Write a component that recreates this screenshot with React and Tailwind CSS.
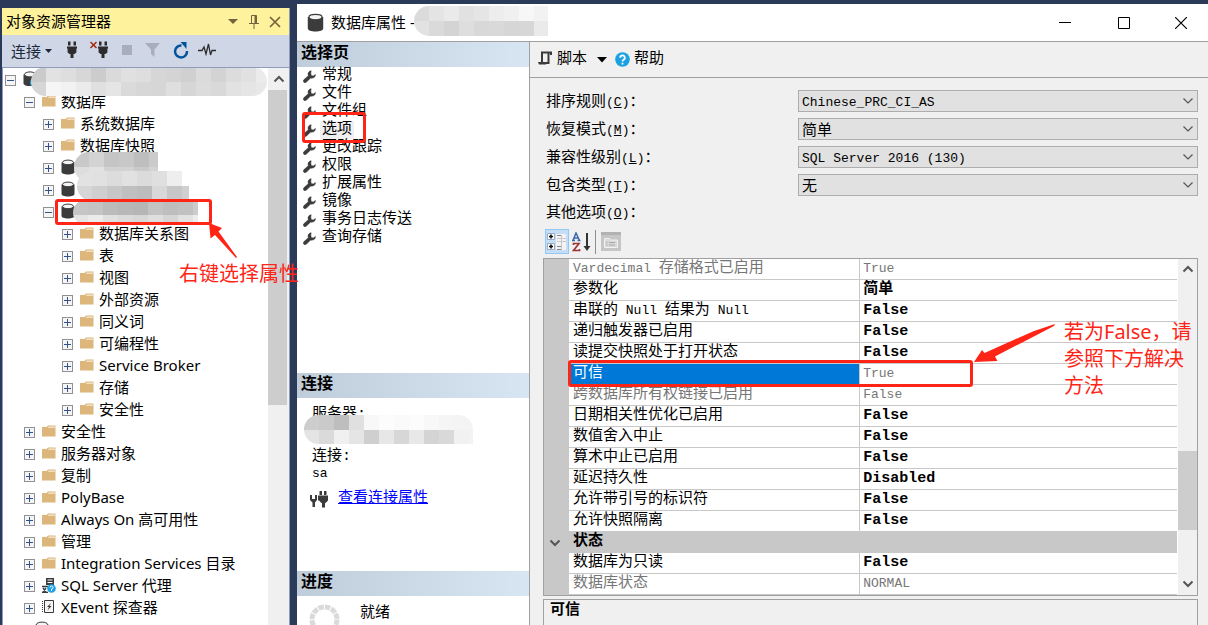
import { useState } from 'react'

const tree = [
    { label: '', level: 0, open: true, icon: 'server' },
    { label: '数据库', level: 1, open: true, icon: 'folder' },
    { label: '系统数据库', level: 2, icon: 'folder' },
    { label: '数据库快照', level: 2, icon: 'folder' },
    { label: '', level: 2, icon: 'db' },
    { label: '', level: 2, icon: 'db' },
    { label: '', level: 2, open: true, icon: 'db', marked: true },
    { label: '数据库关系图', level: 3, icon: 'folder' },
    { label: '表', level: 3, icon: 'folder' },
    { label: '视图', level: 3, icon: 'folder' },
    { label: '外部资源', level: 3, icon: 'folder' },
    { label: '同义词', level: 3, icon: 'folder' },
    { label: '可编程性', level: 3, icon: 'folder' },
    { label: 'Service Broker', level: 3, icon: 'folder' },
    { label: '存储', level: 3, icon: 'folder' },
    { label: '安全性', level: 3, icon: 'folder' },
    { label: '安全性', level: 1, icon: 'folder' },
    { label: '服务器对象', level: 1, icon: 'folder' },
    { label: '复制', level: 1, icon: 'folder' },
    { label: 'PolyBase', level: 1, icon: 'folder' },
    { label: 'Always On 高可用性', level: 1, icon: 'folder' },
    { label: '管理', level: 1, icon: 'folder' },
    { label: 'Integration Services 目录', level: 1, icon: 'folder' },
    { label: 'SQL Server 代理', level: 1, icon: 'agent' },
    { label: 'XEvent 探查器', level: 1, icon: 'xevent' },
    { label: '', level: 1, icon: 'db', last: true },
];

const indents = ['pl-[2px]', 'pl-[21px]', 'pl-[40px]', 'pl-[59px]'];

const pages = ['常规', '文件', '文件组', '选项', '更改跟踪', '权限', '扩展属性', '镜像', '事务日志传送', '查询存储'];

const fields = [
    { id: 'collation', label: '排序规则', key: 'C', value: 'Chinese_PRC_CI_AS', latin: true },
    { id: 'recovery', label: '恢复模式', key: 'M', value: '简单' },
    { id: 'compat', label: '兼容性级别', key: 'L', value: 'SQL Server 2016 (130)', latin: true },
    { id: 'containment', label: '包含类型', key: 'T', value: '无' },
];

const rows = [
    { name: 'Vardecimal 存储格式已启用', value: 'True', readOnly: true },
    { name: '参数化', value: '简单' },
    { name: '串联的 Null 结果为 Null', value: 'False' },
    { name: '递归触发器已启用', value: 'False' },
    { name: '读提交快照处于打开状态', value: 'False' },
    { name: '可信', value: 'True', readOnly: true, selected: true },
    { name: '跨数据库所有权链接已启用', value: 'False', readOnly: true },
    { name: '日期相关性优化已启用', value: 'False' },
    { name: '数值舍入中止', value: 'False' },
    { name: '算术中止已启用', value: 'False' },
    { name: '延迟持久性', value: 'Disabled' },
    { name: '允许带引号的标识符', value: 'False' },
    { name: '允许快照隔离', value: 'False' },
    { name: '状态', category: true },
    { name: '数据库为只读', value: 'False' },
    { name: '数据库状态', value: 'NORMAL', readOnly: true },
];

// Latin runs sit narrower than the CJK text around them
function Mixed({ text, bold }) {
    const parts = text.split(/([\x20-\x7e]+)/).filter(Boolean);
    return parts.map((part, i) =>
        /^[\x20-\x7e]/.test(part)
            ? <span key={i} className={`whitespace-pre ${bold ? 'text-[15px]' : 'text-[13px]'}`}>{part}</span>
            : <span key={i}>{part}</span>
    );
}

// grey blocks that hide server and database names
function Mosaic({ cells, className }) {
    const width = Math.max(...cells.map((row) => row.length)) * 15;
    return (
        <div className={`absolute overflow-hidden pointer-events-none ${className}`}>
            <svg width={width} height={cells.length * 15} className="block" shapeRendering="crispEdges">
                {cells.map((row, y) => row.map((g, x) => (
                    g < 255 && <rect key={`${x}-${y}`} x={x * 15} y={y * 15} width="15" height="15" fill={`rgb(${g},${g},${g})`} />
                )))}
            </svg>
        </div>
    );
}

function Cylinder({ size = 14 }) {
    return (
        <svg width={size} height={size + 2} viewBox="0 0 14 16" className="shrink-0">
            <path d="M.5 3.400v9.400C.5 14.600 3.300 15.500 7 15.500s6.500-.9 6.500-2.700V3.400z" fill="#3b3b3b" />
            <ellipse cx="7" cy="3.400" rx="5.500" ry="2.300" fill="#f4f4f4" stroke="#3b3b3b" />
        </svg>
    );
}

function TreeIcon({ type }) {
    if (type === 'folder') {
        return (
            <svg width="14" height="12" viewBox="0 0 14 12" className="shrink-0">
                <path d="M0 2h4.500L6 .5h7.500V11.500H0z" fill="#dcb67a" />
                <path d="M5.500 2.800L6.800 1.500H13v1.300z" fill="#f6ead6" />
            </svg>
        );
    }
    if (type === 'agent') {
        return (
            <svg width="14" height="15" viewBox="0 0 14 15" className="shrink-0">
                <path d="M4 0h8v7H4z" fill="#3b3b3b" />
                <path d="M5.500 2h5M5.500 4.500h5" stroke="#fff" />
                <path d="M0 8.500h6M1 10l3 4M4 10l-3 4M0 14.500h6" stroke="#3b3b3b" strokeWidth="1.300" />
                <circle cx="9.500" cy="10.500" r="4.300" fill="#1ba1e2" />
                <path d="M8 9.500a1.500 1.500 0 1 1 1.500 1.500v2" stroke="#fff" fill="none" />
            </svg>
        );
    }
    if (type === 'xevent') {
        return (
            <svg width="14" height="14" viewBox="0 0 14 14" className="shrink-0">
                <path d="M2.500.5h9v12h-9z" fill="#f4f4f4" stroke="#3b3b3b" />
                <path d="M.5 1v12" stroke="#3b3b3b" strokeDasharray="1 1" />
                <path d="M9 3L5 7h2l-1.500 3.500L9.500 6h-2z" fill="#3b3b3b" />
            </svg>
        );
    }
    if (type === 'server') {
        return (
            <svg width="14" height="16" viewBox="0 0 14 16" className="shrink-0">
                <path d="M.5 3.400v9C.5 14 3.600 15 7 15h5V3.400z" fill="#3b3b3b" />
                <ellipse cx="7" cy="3.400" rx="5.500" ry="2.500" fill="#f4f4f4" stroke="#3b3b3b" />
                <circle cx="11" cy="11.500" r="4" fill="#1ba1e2" />
            </svg>
        );
    }
    return <Cylinder />;
}

function Plug() {
    return (
        <svg width="12" height="18" viewBox="0 0 12 18">
            <path d="M2 .5h2.500v4H2zM7.500.5H10v4H7.500zM1 5.500h10v2h-.6v4L8.500 13H7.500v4h-3v-4h-1L1.600 11.500v-4H1z" fill="#2d2d2d" />
        </svg>
    );
}

function Wrench() {
    return (
        <svg width="13" height="13" viewBox="0 0 13 13" className="shrink-0">
            <path d="M8.200.8C6.400.9 5 2.300 5 4.100c0 .6.100 1.100.3 1.600L1 9.600c-.9.900-.9 1.900-.2 2.600.7.700 1.800.7 2.700-.1l4.200-4.200c.5.200 1 .3 1.600.2 1.900-.1 3.300-1.600 3.100-3.600L10.300 6 8.200 5.600 7.800 3z" fill="#3b3b3b" stroke="#3b3b3b" strokeWidth=".5" />
        </svg>
    );
}

function Chevron({ up, bold }) {
    return (
        <svg width="12" height="8" viewBox="0 0 12 8">
            <path d={up ? 'M1.500 6.500L6 2l4.500 4.500' : 'M1.500 1.500L6 6l4.500-4.500'} fill="none" stroke="#555" strokeWidth={bold ? 2 : 1.2} />
        </svg>
    );
}

function ExplorerHeader() {
    return (
        <>
            <div className="flex items-center h-[27px] pl-1 pr-2 bg-[#fff29d]">
                <h2 className="text-[15px] flex-1">对象资源管理器</h2>
                <div className="flex items-center gap-[9px]">
                    <button aria-label="窗口位置" className="w-3 flex justify-center">
                        <svg width="10" height="5" viewBox="0 0 10 5"><path d="M0 0h10L5 5z" fill="#75633d" /></svg>
                    </button>
                    <button aria-label="自动隐藏" className="w-3 flex justify-center">
                        <svg width="10" height="14" viewBox="0 0 10 14" fill="none" stroke="#75633d">
                            <path d="M2.500 8V.5h5V8M0 8.500h10M5 9v5" /><path d="M6.500 1v7" strokeWidth="2" />
                        </svg>
                    </button>
                    <button aria-label="关闭" className="w-3 flex justify-center">
                        <svg width="12" height="12" viewBox="0 0 12 12"><path d="M1 1l10 10M11 1L1 11" stroke="#75633d" strokeWidth="1.700" /></svg>
                    </button>
                </div>
            </div>
            <div className="flex items-center h-8 pl-[9px] pb-0.5 bg-[#cfd6e5] text-[#1b293e]">
                <button className="flex items-center gap-1 pt-0.5 text-[15px]">
                    连接
                    <svg width="7" height="4" viewBox="0 0 7 4"><path d="M0 0h7L3.500 4z" fill="#1b293e" /></svg>
                </button>
                <div className="flex items-center gap-[13px] pl-[14px]">
                    <button aria-label="连接服务器"><Plug /></button>
                    <button aria-label="断开连接" className="flex items-start -ml-px">
                        <svg width="7" height="8" viewBox="0 0 7 8"><path d="M.5 1l6 6M6.500 1l-6 6" stroke="#a1260d" strokeWidth="1.500" /></svg>
                        <Plug />
                    </button>
                    <button aria-label="停止" className="size-[10px] bg-[#a8aebb]" />
                    <button aria-label="筛选">
                        <svg width="15" height="14" viewBox="0 0 15 14"><path d="M0 0h15L9.500 6.500V14L6 11V6.500z" fill="#a8aebb" /></svg>
                    </button>
                    <button aria-label="刷新">
                        <svg width="16" height="17" viewBox="0 0 16 17">
                            <path d="M8.500 3.500A6 6 0 1 0 14 9" fill="none" stroke="#00539c" strokeWidth="2.500" />
                            <path d="M7.500 0H13.500v7z" fill="#00539c" />
                        </svg>
                    </button>
                    <button aria-label="活动监视器" className="-ml-1">
                        <svg width="18" height="14" viewBox="0 0 18 14"><path d="M0 7.500h4L6 4l2 7L10.500 1l2 11L14 7.500h4" fill="none" stroke="#2d2d2d" strokeWidth="1.300" /></svg>
                    </button>
                </div>
            </div>
        </>
    );
}

function TreeRow({ item }) {
    return (
        <li className={`relative flex items-center h-[22px] shrink-0 ${indents[item.level]}`}>
            {item.last ? <span className="w-[11px]" /> : (
                <button aria-label={item.open ? '折叠' : '展开'} className="mt-0.5 size-[11px] shrink-0 border border-[#919191] bg-[#f5f5f5]">
                    <svg width="9" height="9" viewBox="0 0 9 9" className="block">
                        <path d={item.open ? 'M1 4.500h7' : 'M1 4.500h7M4.500 1v7'} stroke="#33508f" />
                    </svg>
                </button>
            )}
            <span className={`flex justify-center w-[14px] ${item.last ? '' : 'ml-[7px]'}`}><TreeIcon type={item.icon} /></span>
            <span className="pl-[5px] text-[15px] whitespace-nowrap">{item.label}</span>
            {item.marked && <span className="absolute z-10 left-[52px] -top-px w-[157px] h-[26px] border-[3px] border-[#ff2516] rounded-[3px]" />}
        </li>
    );
}

function Explorer() {
    return (
        <aside className="flex flex-col w-72 shrink-0 mt-2 mr-[7px] ml-0.5 border-r border-[#8e9bbc] overflow-hidden">
            <ExplorerHeader />
            <div className="flex flex-1 min-h-0 bg-white border-t border-l border-[#8e9bbc]">
                <ul className="relative flex-1 min-w-0 overflow-hidden">
                    {tree.map((item, i) => <TreeRow key={i} item={item} />)}
                    <Mosaic className="left-[28px] -top-px h-[29px] w-[236px] rounded-full" cells={[
                        [203, 226, 222, 215, 204, 218, 224, 222, 214, 212, 208, 219, 211, 220, 225, 235],
                        [214, 246, 242, 235, 224, 229, 218, 215, 214, 223, 214, 220, 217, 226, 229, 232],
                    ]} />
                    <Mosaic className="left-[71px] top-[84px] h-[30px] w-[84px] rounded-l-full" cells={[
                        [201, 211, 197, 200, 190, 203],
                        [221, 226, 210, 211, 202, 211],
                    ]} />
                    <Mosaic className="left-[74px] top-[103px] h-[30px] w-[112px] rounded-l-full" cells={[
                        [226, 225, 220, 225, 219, 223, 238, 255],
                        [214, 207, 199, 191, 188, 216, 199, 208],
                    ]} />
                    <Mosaic className="left-[70px] top-[132px] h-[25px] w-[125px] rounded-l-full" cells={[
                        [198, 196, 187, 184, 182, 195, 190, 193, 204],
                        [228, 235, 224, 219, 215, 223, 213, 226, 236],
                    ]} />
                </ul>
                <div className="flex flex-col items-center w-[21px] bg-[#f0f0f0]">
                    <button aria-label="向上滚动" className="flex items-center justify-center h-[22px]"><Chevron up bold /></button>
                    <div className="w-[19px] h-[315px] mr-0.5 bg-[#cdcdcd]" />
                </div>
            </div>
        </aside>
    );
}

function SectionTitle({ children }) {
    return <h3 className="flex items-center h-[25px] pl-1 pb-0.5 text-[16px] font-bold bg-linear-to-r from-[#bfccda] to-[#d8e5f2]">{children}</h3>;
}

function PagesPane({ page, setPage }) {
    return (
        <nav className="flex flex-col w-[233px] shrink-0 bg-white border-r border-[#a0a0a0] overflow-hidden">
            <SectionTitle>选择页</SectionTitle>
            <ul className="flex-1 pl-[6px]">
                {pages.map((p) => (
                    <li key={p} className="relative flex items-center h-[18px]">
                        <Wrench />
                        <button onClick={() => setPage(p)} className={`ml-1 px-0.5 h-[18px] leading-[18px] ${page === p ? 'bg-[#f0f0f0]' : ''}`}>{p}</button>
                        {p === '选项' && <span className="absolute z-10 -left-px -top-[9px] w-16 h-[31px] border-[3px] border-[#ff2516] rounded-[3px]" />}
                    </li>
                ))}
            </ul>
            <SectionTitle>连接</SectionTitle>
            <div className="relative h-[173px] pl-[15px] pt-2 leading-[18px]">
                <p>服务器:</p>
                <Mosaic className="left-[7px] top-[17px] h-[29px] w-[169px] rounded-l-full rounded-tr-full" cells={[
                    [205, 202, 190, 224, 248, 252, 250, 252, 248, 245, 244, 244],
                    [228, 218, 240, 229, 207, 231, 215, 232, 212, 217, 241, 243],
                ]} />
                <p className="pt-6">连接:</p>
                <p className="leading-4"><Mixed text="sa" /></p>
                <div className="flex items-center gap-[10px] pt-2 -ml-0.5">
                    <svg width="18" height="17" viewBox="0 0 18 17" className="shrink-0">
                        <path d="M0 4h2v4h3V4h2v5L5 11.500V16H2.500v-4.500L0 9zM9.500 0H12v4H9.500zM14 0h2.500v4H14zM8 4.500h10v5L15.500 12H15v4.500h-3V12h-.5L9 9.500H8z" fill="#3b3b3b" />
                    </svg>
                    <a href="#connection" className="text-[#0000ff] underline">查看连接属性</a>
                </div>
            </div>
            <SectionTitle>进度</SectionTitle>
            <div className="flex h-[29px] pl-3 pt-2 shrink-0">
                <svg width="31" height="31" viewBox="0 0 31 31" className="shrink-0">
                    <circle cx="15.500" cy="15.500" r="12.500" fill="none" stroke="#dadada" strokeWidth="5" strokeDasharray="5.500 1.040" />
                </svg>
                <span className="pl-5 leading-5">就绪</span>
            </div>
        </nav>
    );
}

function Field({ field }) {
    return (
        <div className="flex items-center h-[22px]">
            <label htmlFor={field.id} className="w-[252px] shrink-0 pt-[3px] leading-5">
                {field.label}<span className="text-[13px]">(<u>{field.key}</u>)</span>：
            </label>
            <div className="relative flex-1">
                <select id={field.id} className={`appearance-none block w-full h-[22px] px-[3px] pt-0.5 bg-[#e1e1e1] border border-[#adadad] ${field.latin ? 'text-[13px]' : 'text-[15px]'}`}>
                    <option>{field.value}</option>
                </select>
                <span className="absolute right-1 top-[7px] pointer-events-none"><Chevron /></span>
            </div>
        </div>
    );
}

function GridTools() {
    return (
        <div className="flex items-center h-[25px] mt-[5px] -ml-px">
            <button aria-label="按分类顺序" className="flex items-center justify-center w-6 h-[25px] border border-[#90c8f6] bg-[#c5def5]">
                <svg width="20" height="19" viewBox="0 0 20 19">
                    <path d="M9 2h10v16H9z" fill="#f3f3f3" />
                    <path d="M.5 1.500h7v6h-7zM.5 11.500h7v6h-7z" fill="#fff" stroke="#9aabc8" />
                    <path d="M4 2.500v4M2 4.500h4M4 12.500v4M2 14.500h4" stroke="#111" strokeWidth="1.600" />
                    <path d="M10 3.500h4M10 14.500h4M10 17.500h4" stroke="#888" />
                    <path d="M10 6.500h9M10 9.500h9M14.500 3v15" stroke="#c9c9c9" />
                </svg>
            </button>
            <button aria-label="字母顺序" className="flex items-center w-6 pl-[3px]">
                <svg width="19" height="20" viewBox="0 0 19 20" fill="none">
                    <path d="M1 8.500L4 1l3.500 7.500M2.500 6h4M0 8.500h3M5.500 8.500h3" stroke="#3a68b0" strokeWidth="1.500" />
                    <path d="M1.500 13v-1.500h5.500L1.500 18.500h6V17" stroke="#9c3434" strokeWidth="1.600" />
                    <path d="M15 1v14" stroke="#333" strokeWidth="2" /><path d="M11.500 14h7L15 19z" fill="#333" />
                </svg>
            </button>
            <span className="w-px h-6 ml-0.5 bg-[#8d8d8d]" />
            <button aria-label="属性页" disabled className="ml-[5px]">
                <svg width="20" height="19" viewBox="0 0 20 19" fill="none">
                    <path d="M0 0h20v19H0z" fill="#c6c6c6" /><path d="M0 1.500h20" stroke="#b2b2b2" strokeWidth="3" />
                    <path d="M3.500 15.500v-9h5l1 1.500h7v7.500z" fill="#d8d8d8" stroke="#f1f1f1" />
                    <path d="M5 10.500h1.500M8 10.500h6M5 13h1.500M8 13h6" stroke="#aaa" />
                </svg>
            </button>
        </div>
    );
}

function PropertyGrid() {
    return (
        <div className="relative flex mt-1 -ml-[3px] border border-[#a0a0a0] bg-white">
            <table className="flex-1 table-fixed border-separate border-spacing-0 w-full">
                <colgroup>
                    <col className="w-[25px]" />
                    <col className="w-[46%]" />
                    <col />
                </colgroup>
                <tbody>
                    {rows.map((row) => row.category ? (
                        <tr key={row.name} className="h-[21px] bg-[#c8c8c8]">
                            <td className="p-0 pl-[5px]"><button aria-label="折叠" className="block"><Chevron bold /></button></td>
                            <th colSpan={2} className="p-0 pl-1 pb-px text-left font-bold"><div className="h-5 leading-5">{row.name}</div></th>
                        </tr>
                    ) : (
                        <tr key={row.name} className={`h-[21px] ${row.readOnly ? 'text-[#767676]' : ''}`}>
                            <td className="p-0 bg-[#c8c8c8]" />
                            <td className={`p-0 pl-1 border-b border-r border-[#c8c8c8] whitespace-nowrap ${row.selected ? 'bg-[#0078d7] text-white' : ''}`}>
                                <div className="h-5 leading-5"><Mixed text={row.name} /></div>
                            </td>
                            <td className={`p-0 pl-[3px] border-b border-[#c8c8c8] ${row.readOnly ? '' : 'font-bold'}`}>
                                <div className="h-5 leading-5"><Mixed text={row.value} bold={!row.readOnly} /></div>
                            </td>
                        </tr>
                    ))}
                </tbody>
            </table>
            <div className="flex flex-col items-center w-5 shrink-0 bg-[#f0f0f0] border-l border-white">
                <button aria-label="向上滚动" className="flex items-center justify-center h-5"><Chevron up bold /></button>
                <div className="flex-1" />
                <div className="w-full h-[79px] bg-[#cdcdcd]" />
                <div className="h-[43px]" />
                <button aria-label="向下滚动" className="flex items-center justify-center h-[22px]"><Chevron bold /></button>
            </div>

            <span className="absolute z-10 left-6 top-[101px] w-[405px] h-[27px] border-[3px] border-[#ff2516] rounded-[3px] pointer-events-none" />
            <svg width="82" height="40" viewBox="0 0 82 40" className="absolute z-10 left-[430px] top-[64px] pointer-events-none">
                <path d="M81 1L80 3 21 33.500l2.500 4.500L0 39 8 27l2.500 3L60 8z" fill="#ff2516" />
            </svg>
            <p className="absolute z-10 left-[520px] top-[59px] w-[134px] text-[20px] leading-[27px] text-[#ff2516] font-['Noto_Sans','Noto_Sans_CJK_SC',sans-serif]">
                若为False，请<br />参照下方解决<br />方法
            </p>
        </div>
    );
}

function OptionsPane() {
    return (
        <section className="flex flex-col flex-1 min-w-0 bg-[#f0f0f0] overflow-hidden">
            <div className="flex items-center h-9 shrink-0 pl-2 border-b border-[#a0a0a0]">
                <button className="flex items-center gap-[5px] leading-5">
                    <svg width="14" height="14" viewBox="0 0 14 14" fill="none" className="mb-1">
                        <path d="M4 11V1.500h9V4M10.500 2v10H1" stroke="#3b3b3b" strokeWidth="2" />
                        <path d="M0 11h8v2.500H1z" fill="#3b3b3b" />
                    </svg>
                    脚本
                    <svg width="10" height="6" viewBox="0 0 10 6" className="ml-[5px]"><path d="M0 0h10L5 5.500z" fill="#000" /></svg>
                </button>
                <button className="flex items-center gap-1 pl-2 leading-5">
                    <svg width="15" height="15" viewBox="0 0 15 15" fill="none">
                        <circle cx="7.500" cy="7.500" r="7.300" fill="#1ba1e2" />
                        <path d="M5.200 5.800a2.300 2.300 0 1 1 3.300 2c-.8.400-1 .8-1 1.700M7.500 10.800v1.700" stroke="#fff" strokeWidth="1.800" />
                    </svg>
                    帮助
                </button>
            </div>
            <div className="flex flex-col flex-1 min-h-0 pt-3 pl-4 pr-[10px]">
                <div className="flex flex-col gap-1.5">
                    {fields.map((field) => <Field key={field.id} field={field} />)}
                </div>
                <p className="mt-1.5 h-[22px] leading-6">其他选项<span className="text-[13px]">(<u>O</u>)</span>：</p>
                <GridTools />
                <PropertyGrid />
                <div className="flex-1 min-h-6 mt-[3px] -ml-[3px] pl-1.5 border border-b-0 border-[#a0a0a0] font-bold leading-[21px]">可信</div>
            </div>
        </section>
    );
}

function PropertiesDialog() {
    const [page, setPage] = useState('选项');

    return (
        <main className="flex flex-col flex-1 min-w-0 mt-1 bg-white text-[15px] font-['Liberation_Mono','Noto_Sans_CJK_SC',monospace]">
            <header className="relative flex items-center h-[37px] shrink-0 pl-[10px]">
                <Cylinder size={17} />
                <h1 className="pl-[7px] text-[15px] font-['Noto_Sans','Noto_Sans_CJK_SC',sans-serif]">数据库属性 -</h1>
                <Mosaic className="left-[117px] top-0.5 h-[30px] w-[134px] rounded-l-full" cells={[
                    [219, 228, 234, 225, 229, 237, 240, 247, 242],
                    [226, 218, 212, 222, 216, 217, 214, 215, 234],
                ]} />
                <div className="flex items-center ml-auto">
                    <button aria-label="最小化" className="flex justify-center w-[59px] h-9 items-center"><svg width="12" height="12"><path d="M0 5.500h12" stroke="#000" /></svg></button>
                    <button aria-label="最大化" className="flex justify-center w-[59px] h-9 items-center"><svg width="12" height="12"><path d="M.5.5h11v11H.5z" stroke="#000" fill="none" /></svg></button>
                    <button aria-label="关闭" className="flex justify-center w-[55px] h-9 items-center"><svg width="12" height="12"><path d="M0 0l12 12M12 0L0 12" stroke="#000" strokeWidth="1.200" /></svg></button>
                </div>
            </header>
            <div className="flex flex-1 min-h-0 border-t border-[#a0a0a0]">
                <PagesPane page={page} setPage={setPage} />
                <OptionsPane />
            </div>
        </main>
    );
}

export default function App() {
    return (
        <div className="relative flex h-screen overflow-hidden bg-[#2b3a59] text-black font-['Noto_Sans','Noto_Sans_CJK_SC',sans-serif]">
            <Explorer />
            <PropertiesDialog />

            <svg width="30" height="36" viewBox="0 0 30 36" className="absolute z-10 left-[208px] top-[223px] pointer-events-none">
                <path d="M1 0l13 5-3.500 3.500L29 34l-1 1L7 12l-4.500 3.500z" fill="#ff2516" />
            </svg>
            <p className="absolute z-10 left-[179px] top-[260px] text-[20px] leading-7 text-[#ff2516] whitespace-nowrap">右键选择属性</p>
        </div>
    );
}
